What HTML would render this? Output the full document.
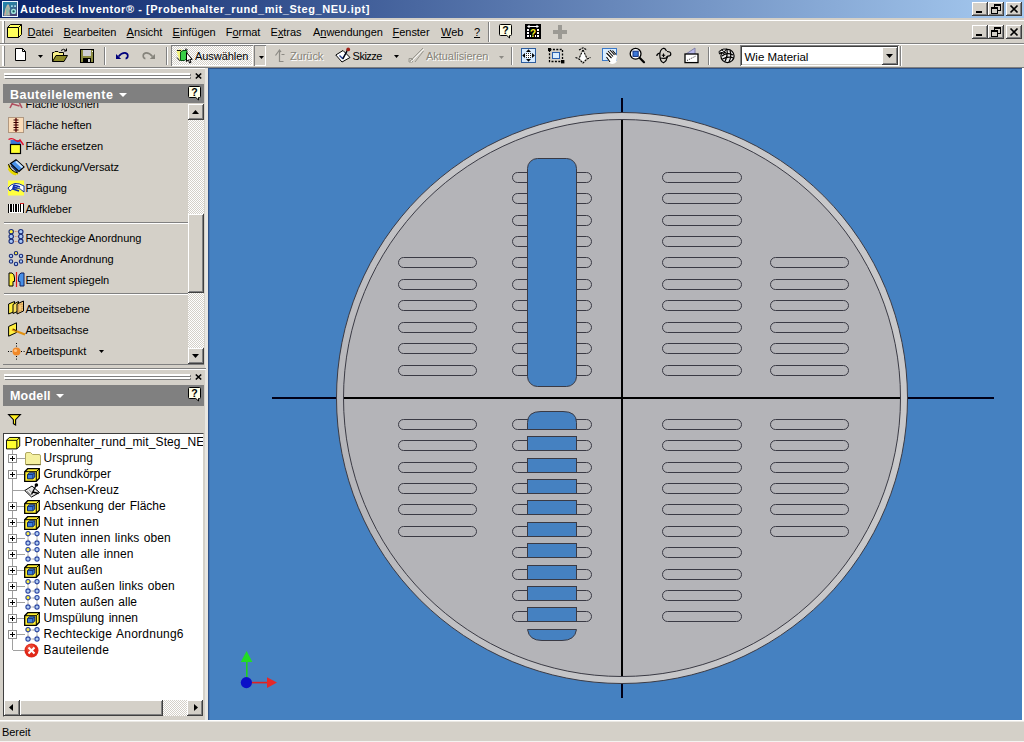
<!DOCTYPE html>
<html lang="de"><head><meta charset="utf-8"><title>Autodesk Inventor - [Probenhalter_rund_mit_Steg_NEU.ipt]</title>
<style>
html,body{margin:0;padding:0}
body{width:1024px;height:742px;overflow:hidden;position:relative;background:#d4d0c8;font-family:"Liberation Sans",sans-serif;font-size:11px;color:#000}
.a{position:absolute}
.t{position:absolute;white-space:nowrap;font-size:11px;line-height:13px;letter-spacing:-0.05px}
.tt{position:absolute;white-space:nowrap;font-size:12px;line-height:16px;word-spacing:1px}
.dis{color:#868378;text-shadow:1px 1px 0 #fff}
u{text-decoration:underline;text-underline-offset:1px}
.btn{position:absolute;background:#d4d0c8;box-shadow:inset -1px -1px 0 #404040,inset 1px 1px 0 #fff,inset -2px -2px 0 #808080;box-sizing:border-box}
.sep{position:absolute;width:1px;background:#808080;box-shadow:1px 0 0 #fff}
.hl{position:absolute;height:1px}
.dith{background-image:conic-gradient(#fff 25%,#d4d0c8 0 50%,#fff 0 75%,#d4d0c8 0);background-size:2px 2px}
svg{position:absolute;overflow:visible}
</style></head>
<body>
<div class="a" style="left:0;top:0;width:1024px;height:18px;background:linear-gradient(to right,#0a246a,#a6caf0)"></div>
<svg style="left:2px;top:1px" width="16" height="16" viewBox="0 0 16 16"><defs><linearGradient id="ai" x1="0" y1="0" x2="0.6" y2="1"><stop offset="0" stop-color="#1f86b0"/><stop offset="0.45" stop-color="#2c7a9c"/><stop offset="1" stop-color="#4a4474"/></linearGradient></defs><rect width="16" height="16" fill="#eaf6ff"/><rect x="1" y="1" width="14" height="14" fill="url(#ai)"/><path d="M2 14.6 L3.2 8 L5 4 Q6 2.4 7 4 L8 7.5 L7.4 10 L8 14.6 Z" fill="#b9b4a8"/><path d="M4.4 6.5 L6.6 6.5 L7 10 L5 14.6 L3.6 14.6 Z" fill="#8fb8a8"/><path d="M2.4 14.6 L3.4 9 L4 9 L3.4 14.6 Z" fill="#d8a090"/><circle cx="11.6" cy="10.4" r="1.9" fill="#0e5a58" stroke="#9fe0dc" stroke-width="1.5"/><rect x="9" y="4.4" width="1.8" height="1.4" fill="#b8f0ff"/><rect x="12.2" y="4.4" width="1.8" height="1.4" fill="#b8f0ff"/></svg>
<div class="a" style="left:20px;top:3px;font-size:11px;line-height:13px;font-weight:bold;color:#fff;white-space:nowrap;letter-spacing:0.55px">Autodesk Inventor® - [Probenhalter_rund_mit_Steg_NEU.ipt]</div>
<div class="btn" style="left:972px;top:2px;width:16px;height:14px"></div>
<div class="btn" style="left:988px;top:2px;width:16px;height:14px"></div>
<div class="btn" style="left:1006px;top:2px;width:16px;height:14px"></div>
<div class="a" style="left:976px;top:11px;width:6px;height:2px;background:#000"></div>
<svg style="left:991px;top:4px" width="10" height="10" viewBox="0 0 10 10" shape-rendering="crispEdges"><rect x="3" y="0" width="6" height="6" fill="none" stroke="#000" stroke-width="1" transform="translate(.5 .5)"/><rect x="3" y="0" width="7" height="2" fill="#000"/><rect x="0" y="3" width="6" height="6" fill="#d4d0c8" stroke="#000" stroke-width="1" transform="translate(.5 .5)"/><rect x="0" y="3" width="7" height="2" fill="#000"/></svg>
<svg style="left:1010px;top:5px" width="8" height="8" viewBox="0 0 8 8"><path d="M0.5 0.5 L7.5 7.5 M7.5 0.5 L0.5 7.5" stroke="#000" stroke-width="1.7" fill="none"/></svg>
<div class="hl" style="left:0;top:20px;width:1024px;background:#fff"></div>
<div class="a" style="left:2px;top:21px;width:2px;height:22px;background:#fff"></div><div class="a" style="left:4px;top:21px;width:1px;height:22px;background:#808080"></div>
<svg style="left:7px;top:24px" width="15" height="14" viewBox="0 0 15 14"><path d="M0.5 3.5 L3.5 0.5 H14.5 V10.5 L11.5 13.5 H0.5 Z" fill="#ffff5a" stroke="#000" stroke-width="1"/><path d="M0.5 3.5 H11.5 V13.5 M11.5 3.5 L14.5 0.5" fill="none" stroke="#000" stroke-width="1"/></svg>
<div class="t" style="left:27.6px;top:26.3px;"><u>D</u>atei</div>
<div class="t" style="left:63.6px;top:26.3px;"><u>B</u>earbeiten</div>
<div class="t" style="left:126.6px;top:26.3px;"><u>A</u>nsicht</div>
<div class="t" style="left:172.6px;top:26.3px;"><u>E</u>infügen</div>
<div class="t" style="left:225.8px;top:26.3px;">F<u>o</u>rmat</div>
<div class="t" style="left:270.6px;top:26.3px;">E<u>x</u>tras</div>
<div class="t" style="left:313px;top:26.3px;">A<u>n</u>wendungen</div>
<div class="t" style="left:392.6px;top:26.3px;"><u>F</u>enster</div>
<div class="t" style="left:441px;top:26.3px;"><u>W</u>eb</div>
<div class="t" style="left:474px;top:26.3px;"><u>?</u></div>
<div class="sep" style="left:488px;top:22px;height:20px"></div>
<svg style="left:499px;top:24px" width="13" height="15" viewBox="0 0 13 15"><path d="M0.5 1.5 Q0.5 0.5 1.5 0.5 H11.5 Q12.5 0.5 12.5 1.5 V10.5 Q12.5 11.5 11.5 11.5 H10.5 V14 L7.8 11.5 H1.5 Q0.5 11.5 0.5 10.5 Z" fill="#ffffe8" stroke="#000" stroke-width="1"/><text x="6.5" y="9.8" font-size="10.5" font-weight="bold" text-anchor="middle" fill="#000" font-family="Liberation Sans,sans-serif">?</text></svg>
<svg style="left:525px;top:24px" width="16" height="15" viewBox="0 0 16 15"><rect width="16" height="15" fill="#000"/><g fill="#fff" shape-rendering="crispEdges"><rect x="2" y="5" width="2" height="2"/><rect x="2" y="8" width="2" height="2"/><rect x="2" y="11" width="2" height="2"/><rect x="12" y="5" width="2" height="2"/><rect x="12" y="8" width="2" height="2"/><rect x="12" y="11" width="2" height="2"/><rect x="5" y="11" width="1" height="2"/><rect x="10" y="11" width="1" height="2"/><rect x="4" y="2" width="8" height="1"/></g><path d="M2 2.5 L4.5 0.8 V4.2 Z M14 2.5 L11.5 0.8 V4.2 Z" fill="#fff"/><text x="8" y="12.6" font-size="10" font-weight="bold" text-anchor="middle" fill="#f4f020" font-family="Liberation Sans,sans-serif">?</text></svg>
<div class="a" style="left:558px;top:25px;width:4px;height:14px;background:#9c9a94"></div><div class="a" style="left:553px;top:30px;width:14px;height:4px;background:#9c9a94"></div>
<div class="btn" style="left:972px;top:25px;width:16px;height:14px"></div>
<div class="btn" style="left:988px;top:25px;width:16px;height:14px"></div>
<div class="btn" style="left:1006px;top:25px;width:16px;height:14px"></div>
<div class="a" style="left:976px;top:34px;width:6px;height:2px;background:#000"></div>
<svg style="left:991px;top:27px" width="10" height="10" viewBox="0 0 10 10" shape-rendering="crispEdges"><rect x="3" y="0" width="6" height="6" fill="none" stroke="#000" stroke-width="1" transform="translate(.5 .5)"/><rect x="3" y="0" width="7" height="2" fill="#000"/><rect x="0" y="3" width="6" height="6" fill="#d4d0c8" stroke="#000" stroke-width="1" transform="translate(.5 .5)"/><rect x="0" y="3" width="7" height="2" fill="#000"/></svg>
<svg style="left:1010px;top:28px" width="8" height="8" viewBox="0 0 8 8"><path d="M0.5 0.5 L7.5 7.5 M7.5 0.5 L0.5 7.5" stroke="#000" stroke-width="1.7" fill="none"/></svg>
<div class="hl" style="left:0;top:43px;width:1024px;background:#808080"></div><div class="hl" style="left:0;top:44px;width:1024px;background:#fff"></div>
<div class="a" style="left:2px;top:46px;width:2px;height:20px;background:#fff"></div><div class="a" style="left:4px;top:46px;width:1px;height:20px;background:#808080"></div>
<svg style="left:15px;top:48px" width="11" height="13" viewBox="0 0 11 13"><path d="M0.5 0.5 H7.5 L10.5 3.5 V12.5 H0.5 Z" fill="#fff" stroke="#000"/><path d="M7.5 0.5 V3.5 H10.5" fill="none" stroke="#000"/></svg>
<svg style="left:38px;top:55px" width="5" height="3" viewBox="0 0 5 3"><path d="M0 0 H5 L2.5 3 Z" fill="#000"/></svg>
<svg style="left:52px;top:48px" width="16" height="14" viewBox="0 0 16 14"><path d="M9 2.5 Q11.5 0 14 2.5 M14.5 0.5 V3 H12" fill="none" stroke="#000" stroke-width="1"/><path d="M0.5 13.5 V4.5 H2 L3 3.5 H6 L7 4.5 H11.5 V7.5" fill="#f8f088" stroke="#000"/><path d="M0.5 13.5 L4 7.5 H15.5 L12 13.5 Z" fill="#8c8a28" stroke="#000"/></svg>
<svg style="left:80px;top:49px" width="14" height="14" viewBox="0 0 14 14" shape-rendering="crispEdges"><rect x="0.5" y="0.5" width="13" height="13" fill="#8a8a40" stroke="#000"/><rect x="3" y="1" width="8" height="6" fill="#cfcfd4"/><rect x="3" y="9" width="8" height="4" fill="#000"/><rect x="8" y="10" width="2" height="3" fill="#d0d0d0"/><rect x="12" y="2" width="1" height="1" fill="#fff"/></svg>
<div class="sep" style="left:104px;top:47px;height:18px"></div>
<svg style="left:116px;top:52px" width="13" height="8" viewBox="0 0 13 8"><path d="M2.5 4.5 Q5.5 0.8 9 0.9 Q11.8 1.4 11.8 3.8 Q11.8 6.3 9.6 6.6" fill="none" stroke="#00007c" stroke-width="1.7"/><path d="M0 2 V7 H5.2 Z" fill="#00007c"/></svg>
<svg style="left:142px;top:52px" width="13" height="8" viewBox="0 0 13 8"><path d="M10.5 4.5 Q7.5 0.8 4 0.9 Q1.2 1.4 1.2 3.8 Q1.2 6.3 3.4 6.6" fill="none" stroke="#86847c" stroke-width="1.6"/><path d="M13 2 V7 H7.8 Z" fill="#86847c"/></svg>
<div class="sep" style="left:166px;top:47px;height:18px"></div>
<div class="a dith" style="left:171px;top:45px;width:82px;height:21px;box-shadow:inset 1px 1px 0 #808080,inset -1px -1px 0 #fff;box-sizing:border-box"></div>
<svg style="left:176px;top:48px" width="17" height="16" viewBox="0 0 17 16"><path d="M0.5 3 L3 1.5 H6 V11 L3.5 12.5 Z" fill="#f4f47c"/><path d="M1 9.5 L3.5 12.5 L5 11.5" fill="none" stroke="#222" stroke-width="1"/><path d="M4.5 4 L7 2.5 H11 V10.5 L8.5 12.5 H4.5 Z" fill="#38d048" stroke="#0a4a18" stroke-width="1"/><path d="M1 2.5 H5 M9 1.5 Q10.5 0 11.5 2" fill="none" stroke="#111" stroke-width="1"/><path d="M10.5 4.5 V13.5 L12.4 11.8 L13.6 15 L15 14.4 L13.8 11.4 H16.2 Z" fill="#fff" stroke="#000" stroke-width="1"/></svg>
<div class="t" style="left:195px;top:50.1px;">Auswählen</div>
<div class="a" style="left:254px;top:45px;width:12px;height:21px;box-shadow:inset 1px 1px 0 #808080,inset -1px -1px 0 #fff"></div>
<svg style="left:259px;top:56px" width="5" height="3" viewBox="0 0 5 3"><path d="M0 0 H5 L2.5 3 Z" fill="#000"/></svg>
<svg style="left:274px;top:49px" width="12" height="14" viewBox="0 0 12 14"><path d="M1.5 6.5 L5.5 1 L7 3 M5.5 1.5 V12.5 H9.5 M7.5 5.5 H10.5" fill="none" stroke="#8c8a84" stroke-width="1.2"/></svg>
<div class="t dis" style="left:290px;top:50.1px;">Zurück</div>
<svg style="left:335px;top:47px" width="17" height="16" viewBox="0 0 17 16"><path d="M0.8 8 L8 3.5 L15 10.5 L7 15 Z" fill="#fff" stroke="#000" stroke-width="1"/><path d="M4.5 8.5 L7.5 11.5 L12 4.5" fill="none" stroke="#203890" stroke-width="1.3"/><path d="M8 12 L12.6 2.6" stroke="#000" stroke-width="1.2"/><circle cx="13.2" cy="2.4" r="1.9" fill="#a02018"/></svg>
<div class="t" style="left:352.6px;top:50.1px;letter-spacing:-0.5px">Skizze</div>
<svg style="left:394px;top:55px" width="5" height="3" viewBox="0 0 5 3"><path d="M0 0 H5 L2.5 3 Z" fill="#000"/></svg>
<svg style="left:408px;top:47px" width="16" height="16" viewBox="0 0 16 16"><path d="M2 14 L15 1 M7 15 L15.5 4 M1 11.5 H4.5 V15 H1 Z" fill="none" stroke="#9a9890" stroke-width="1"/><path d="M3 15 L16 2" stroke="#fff" stroke-width=".8"/></svg>
<div class="t dis" style="left:426px;top:50.1px;">Aktualisieren</div>
<svg style="left:499px;top:56px" width="5" height="3" viewBox="0 0 5 3"><path d="M0 0 H5 L2.5 3 Z" fill="#8c8a84"/></svg>
<div class="sep" style="left:511px;top:47px;height:18px"></div>
<svg style="left:521px;top:48px" width="15" height="15" viewBox="0 0 15 15"><rect x="0.5" y="0.5" width="14" height="14" fill="#d6eaff" stroke="#2c5c9e"/><rect x="5" y="5" width="5" height="5" fill="#fff"/><path d="M5 5.5 H10 M5 7.5 H10 M5 9.5 H10" stroke="#222" stroke-width="1" stroke-dasharray="1 1"/><path d="M7.5 1.2 L10 4 H5 Z M7.5 13.8 L10 11 H5 Z M1.2 7.5 L4 5 V10 Z M13.8 7.5 L11 5 V10 Z" fill="#000"/></svg>
<svg style="left:548px;top:48px" width="17" height="16" viewBox="0 0 17 16"><rect x="1.5" y="1.5" width="13" height="12" fill="none" stroke="#000" stroke-width="1.3" stroke-dasharray="2 1.4"/><rect x="0" y="0" width="3" height="3" fill="#000"/><rect x="13" y="12" width="3.4" height="3.4" fill="#000"/><rect x="4.5" y="4.5" width="7" height="6" fill="#d8ecff" stroke="#2a60b0" stroke-width="1"/></svg>
<svg style="left:575px;top:47px" width="16" height="17" viewBox="0 0 16 17"><path d="M4 3 L8 0.8 L12 3 M8 3 L4.2 11 M8 3 L11.8 11 M0.5 10.5 L4 12 L8 16 L12 12 L15.5 10.5" fill="none" stroke="#000" stroke-width="1.1" stroke-dasharray="2.2 .8"/><path d="M8 4 L5 11.5 L8 14.5 L11 11.5 Z" fill="#fff"/></svg>
<svg style="left:602px;top:48px" width="17" height="17" viewBox="0 0 17 17"><rect x="0.5" y="0.5" width="14" height="12" fill="#d8ecff" stroke="#3a78c8"/><path d="M5 11 L4 6 L5.5 3 L12 3 L15 8 L14.5 14 Q11 17.5 7.5 15 Z" fill="#fff"/><path d="M4.5 5 L9.5 10 M6 3 L11 8.5 M8 2 L12.5 7 M10.5 2.5 L14 6.5 M4.5 9 L8 14" stroke="#000" stroke-width="1.1" fill="none"/></svg>
<svg style="left:629px;top:47px" width="17" height="17" viewBox="0 0 17 17"><circle cx="6.6" cy="6.8" r="5.4" fill="#fff" stroke="#000" stroke-width="1.3"/><rect x="4" y="4.2" width="5.2" height="5.2" fill="#3c78d8" stroke="#103080" stroke-width="1"/><path d="M10.8 11 L15 15.2" stroke="#000" stroke-width="2.2" stroke-linecap="round"/></svg>
<svg style="left:656px;top:47px" width="17" height="17" viewBox="0 0 17 17"><path d="M7.5 1.2 Q3.6 2.5 3.8 8.5 Q4 14.5 7.5 15.8 Q11 14 11.2 9 M7.5 1.2 Q9.5 1.6 10.5 4" fill="none" stroke="#000" stroke-width="1.2"/><path d="M0.8 9 Q0.8 6.8 3.8 6.2 M11 4.5 Q14.8 4.6 14.8 7 Q14.8 9.2 12 9.2 Q10.8 9.2 11.2 10.6 Q9 12 4 11" fill="none" stroke="#000" stroke-width="1.2"/><path d="M7.5 6.6 V10 M5.8 8.3 H9.2" stroke="#000" stroke-width="1.1"/></svg>
<svg style="left:684px;top:47px" width="15" height="17" viewBox="0 0 15 17"><path d="M2 7 L11 1 V7" fill="#b8b8e8" stroke="#8080a8" stroke-width="1"/><rect x="1" y="7" width="13" height="8.6" fill="#fff" stroke="#000" stroke-width="1.3"/><path d="M3 13.5 L12 9" stroke="#000" stroke-width=".8" stroke-dasharray="1.2 1.2"/></svg>
<div class="sep" style="left:708px;top:47px;height:18px"></div>
<svg style="left:718px;top:47px" width="17" height="17" viewBox="0 0 17 17"><circle cx="9.5" cy="9" r="6.6" fill="#e8e8e8" stroke="#000" stroke-width="1.2"/><path d="M4 9 Q9 5 15 8 M4.5 12 Q10 9 15.5 11 M7 14.5 Q10 8 9 3 M11 15 Q14 9 12 3.5" fill="none" stroke="#000" stroke-width="1.2"/><path d="M1 4.5 Q5 1 9 2 Q6 3.5 6.5 6 Q3 5 1.5 7 Z" fill="#fff" stroke="#000" stroke-width="1"/><path d="M3 2.6 L8 6 M2 5 L6 6.5" stroke="#000" stroke-width="1"/></svg>
<div class="a" style="left:740px;top:45px;width:159px;height:21px;background:#fff;box-sizing:border-box;box-shadow:inset 1px 1px 0 #808080,inset -1px -1px 0 #fff,inset 2px 2px 0 #404040,inset -2px -2px 0 #d4d0c8"></div>
<div class="t" style="left:744.5px;top:50.5px;font-size:11.5px;letter-spacing:0">Wie Material</div>
<div class="btn" style="left:882px;top:47px;width:16px;height:18px"></div>
<svg style="left:886px;top:54px" width="7" height="4" viewBox="0 0 7 4"><path d="M0 0 H7 L3.5 4 Z" fill="#000"/></svg>
<div class="a" style="left:900px;top:46px;width:1px;height:20px;background:#808080"></div><div class="a" style="left:901px;top:46px;width:1px;height:20px;background:#fff"></div>
<div class="hl" style="left:0;top:67px;width:1024px;background:#808080"></div><div class="hl" style="left:0;top:68px;width:207px;background:#fff"></div>
<svg style="position:absolute;left:208px;top:68px" width="814" height="652" viewBox="208 68 814 652">
<rect x="208" y="68" width="814" height="652" fill="#4581c1"/>
<rect x="272" y="397" width="722" height="2" fill="#000018"/>
<rect x="621" y="98" width="2" height="600" fill="#000018"/>
<defs><linearGradient id="rg" x1="0" y1="0.6" x2="1" y2="0.4"><stop offset="0" stop-color="#b4b4b8"/><stop offset="0.12" stop-color="#c0c0c3"/><stop offset="0.4" stop-color="#c7c7c9"/><stop offset="1" stop-color="#c8c8ca"/></linearGradient></defs>
<circle cx="622" cy="398" r="285.5" fill="url(#rg)" stroke="#3a3a44" stroke-width="1"/>
<circle cx="622" cy="398" r="278.5" fill="#b4b4b8" stroke="#3a3a44" stroke-width="1"/>
<rect x="344" y="397" width="556" height="2" fill="#000"/>
<rect x="621" y="120" width="2" height="556" fill="#000"/>
<g fill="none" stroke="#3a3a44" stroke-width="1">
<rect x="512.5" y="172.5" width="79" height="10" rx="5" ry="5"/>
<rect x="662.5" y="172.5" width="79" height="10" rx="5" ry="5"/>
<rect x="512.5" y="419.5" width="79" height="10" rx="5" ry="5"/>
<rect x="662.5" y="419.5" width="79" height="10" rx="5" ry="5"/>
<rect x="512.5" y="193.5" width="79" height="10" rx="5" ry="5"/>
<rect x="662.5" y="193.5" width="79" height="10" rx="5" ry="5"/>
<rect x="512.5" y="440.5" width="79" height="10" rx="5" ry="5"/>
<rect x="662.5" y="440.5" width="79" height="10" rx="5" ry="5"/>
<rect x="512.5" y="215.5" width="79" height="10" rx="5" ry="5"/>
<rect x="662.5" y="215.5" width="79" height="10" rx="5" ry="5"/>
<rect x="512.5" y="462.5" width="79" height="10" rx="5" ry="5"/>
<rect x="662.5" y="462.5" width="79" height="10" rx="5" ry="5"/>
<rect x="512.5" y="236.5" width="79" height="10" rx="5" ry="5"/>
<rect x="662.5" y="236.5" width="79" height="10" rx="5" ry="5"/>
<rect x="512.5" y="483.5" width="79" height="10" rx="5" ry="5"/>
<rect x="662.5" y="483.5" width="79" height="10" rx="5" ry="5"/>
<rect x="512.5" y="257.5" width="79" height="10" rx="5" ry="5"/>
<rect x="662.5" y="257.5" width="79" height="10" rx="5" ry="5"/>
<rect x="512.5" y="504.5" width="79" height="10" rx="5" ry="5"/>
<rect x="662.5" y="504.5" width="79" height="10" rx="5" ry="5"/>
<rect x="512.5" y="279.5" width="79" height="10" rx="5" ry="5"/>
<rect x="662.5" y="279.5" width="79" height="10" rx="5" ry="5"/>
<rect x="512.5" y="526.5" width="79" height="10" rx="5" ry="5"/>
<rect x="662.5" y="526.5" width="79" height="10" rx="5" ry="5"/>
<rect x="512.5" y="300.5" width="79" height="10" rx="5" ry="5"/>
<rect x="662.5" y="300.5" width="79" height="10" rx="5" ry="5"/>
<rect x="512.5" y="547.5" width="79" height="10" rx="5" ry="5"/>
<rect x="662.5" y="547.5" width="79" height="10" rx="5" ry="5"/>
<rect x="512.5" y="322.5" width="79" height="10" rx="5" ry="5"/>
<rect x="662.5" y="322.5" width="79" height="10" rx="5" ry="5"/>
<rect x="512.5" y="569.5" width="79" height="10" rx="5" ry="5"/>
<rect x="662.5" y="569.5" width="79" height="10" rx="5" ry="5"/>
<rect x="512.5" y="343.5" width="79" height="10" rx="5" ry="5"/>
<rect x="662.5" y="343.5" width="79" height="10" rx="5" ry="5"/>
<rect x="512.5" y="590.5" width="79" height="10" rx="5" ry="5"/>
<rect x="662.5" y="590.5" width="79" height="10" rx="5" ry="5"/>
<rect x="512.5" y="365.5" width="79" height="10" rx="5" ry="5"/>
<rect x="662.5" y="365.5" width="79" height="10" rx="5" ry="5"/>
<rect x="512.5" y="611.5" width="79" height="10" rx="5" ry="5"/>
<rect x="662.5" y="611.5" width="79" height="10" rx="5" ry="5"/>
<rect x="398.5" y="257.5" width="78" height="10" rx="5" ry="5"/>
<rect x="770.5" y="257.5" width="78" height="10" rx="5" ry="5"/>
<rect x="398.5" y="279.5" width="78" height="10" rx="5" ry="5"/>
<rect x="770.5" y="279.5" width="78" height="10" rx="5" ry="5"/>
<rect x="398.5" y="300.5" width="78" height="10" rx="5" ry="5"/>
<rect x="770.5" y="300.5" width="78" height="10" rx="5" ry="5"/>
<rect x="398.5" y="322.5" width="78" height="10" rx="5" ry="5"/>
<rect x="770.5" y="322.5" width="78" height="10" rx="5" ry="5"/>
<rect x="398.5" y="343.5" width="78" height="10" rx="5" ry="5"/>
<rect x="770.5" y="343.5" width="78" height="10" rx="5" ry="5"/>
<rect x="398.5" y="365.5" width="78" height="10" rx="5" ry="5"/>
<rect x="770.5" y="365.5" width="78" height="10" rx="5" ry="5"/>
<rect x="398.5" y="419.5" width="78" height="10" rx="5" ry="5"/>
<rect x="770.5" y="419.5" width="78" height="10" rx="5" ry="5"/>
<rect x="398.5" y="440.5" width="78" height="10" rx="5" ry="5"/>
<rect x="770.5" y="440.5" width="78" height="10" rx="5" ry="5"/>
<rect x="398.5" y="462.5" width="78" height="10" rx="5" ry="5"/>
<rect x="770.5" y="462.5" width="78" height="10" rx="5" ry="5"/>
<rect x="398.5" y="483.5" width="78" height="10" rx="5" ry="5"/>
<rect x="770.5" y="483.5" width="78" height="10" rx="5" ry="5"/>
<rect x="398.5" y="504.5" width="78" height="10" rx="5" ry="5"/>
<rect x="770.5" y="504.5" width="78" height="10" rx="5" ry="5"/>
<rect x="398.5" y="526.5" width="78" height="10" rx="5" ry="5"/>
<rect x="770.5" y="526.5" width="78" height="10" rx="5" ry="5"/>
</g>
<g fill="#4581c1" stroke="#3a3a44" stroke-width="1">
<rect x="527.5" y="158.5" width="49" height="228" rx="10" ry="10"/>
<path d="M527.5 429.5 V422.5 Q527.5 411.5 541 411.5 H563 Q576.5 411.5 576.5 422.5 V429.5 Z"/>
<rect x="527.5" y="436.5" width="49" height="14.0"/>
<rect x="527.5" y="458.5" width="49" height="14.0"/>
<rect x="527.5" y="479.5" width="49" height="14.0"/>
<rect x="527.5" y="500.5" width="49" height="14.0"/>
<rect x="527.5" y="522.5" width="49" height="14.0"/>
<rect x="527.5" y="543.5" width="49" height="14.0"/>
<rect x="527.5" y="565.5" width="49" height="14.0"/>
<rect x="527.5" y="586.5" width="49" height="14.0"/>
<rect x="527.5" y="607.5" width="49" height="14.0"/>
<path d="M527.5 629.5 H576.5 Q575 640.5 562 640.5 H542 Q529 640.5 527.5 629.5 Z"/>
</g>
<rect x="246" y="661" width="1.6" height="18" fill="#20d020"/>
<path d="M246.6 651 L252.4 662 H240.8 Z" fill="#22dd22"/>
<rect x="250" y="681.8" width="18" height="1.6" fill="#e02020"/>
<path d="M277 682.6 L267 677.2 V688 Z" fill="#e62828"/>
<circle cx="246.4" cy="682.6" r="5.6" fill="#0a10c8"/>
<rect x="208" y="68" width="814" height="1" fill="#2f5388"/><rect x="208" y="68" width="1" height="652" fill="#2f5388"/><rect x="209" y="69" width="1" height="651" fill="#4274b2"/>
</svg>
<div class="a" style="left:205px;top:68px;width:3px;height:652px;background:#e8e6e1"></div>
<div class="a" style="left:4px;top:73px;width:186px;height:2px;background:#fff;box-shadow:1px 1px 0 #808080"></div><div class="a" style="left:4px;top:76px;width:186px;height:2px;background:#fff;box-shadow:1px 1px 0 #808080"></div><svg style="left:195px;top:73px" width="7" height="6" viewBox="0 0 7 6"><path d="M0.8 0.5 L6.2 5.5 M6.2 0.5 L0.8 5.5" stroke="#000" stroke-width="1.6" fill="none"/></svg>
<div class="a" style="left:3px;top:84px;width:201px;height:19px;background:#808080"></div><div class="a" style="left:10px;top:88px;font-size:12.5px;line-height:15px;font-weight:bold;color:#fff;white-space:nowrap;letter-spacing:0.5px">Bauteilelemente</div><svg style="left:119px;top:93px" width="8" height="4" viewBox="0 0 8 4"><path d="M0 0 H8 L4.0 4 Z" fill="#fff"/></svg><svg style="left:188px;top:86px" width="13" height="15" viewBox="0 0 13 15"><path d="M0.5 1.5 Q0.5 0.5 1.5 0.5 H11.5 Q12.5 0.5 12.5 1.5 V10.5 Q12.5 11.5 11.5 11.5 H10.5 V14 L7.8 11.5 H1.5 Q0.5 11.5 0.5 10.5 Z" fill="#ffffe8" stroke="#000" stroke-width="1"/><text x="6.5" y="9.8" font-size="10.5" font-weight="bold" text-anchor="middle" fill="#000" font-family="Liberation Sans,sans-serif">?</text></svg>
<div class="a" style="left:0;top:103px;width:188px;height:8px;overflow:hidden"><div class="t" style="left:25.6px;top:-4.6px">Fläche löschen</div><svg style="left:9px;top:-8px" width="14" height="14" viewBox="0 0 14 14"><path d="M1 13 L7 1 L13 13 M3.5 9 L10.5 11" stroke="#b05060" stroke-width="1.6" fill="none"/></svg></div>
<svg style="left:8px;top:117px" width="16" height="16" viewBox="0 0 16 16"><rect x="0.5" y="0.5" width="15" height="15" fill="#fbdcb8" stroke="#7a5a40" stroke-width="1" stroke-dasharray="1 1"/><path d="M8 1 V15" stroke="#701010" stroke-width="1.4"/><path d="M5.5 3 H10.5 M5.5 5.5 H10.5 M5.5 8 H10.5 M5.5 10.5 H10.5 M5.5 13 H10.5" stroke="#300" stroke-width="1"/></svg>
<div class="t" style="left:25.6px;top:119.0px;">Fläche heften</div>
<svg style="left:8px;top:138px" width="17" height="16" viewBox="0 0 17 16"><rect x="2.5" y="2" width="10" height="5" fill="#3c78d8"/><rect x="2.5" y="6.5" width="10" height="9" fill="#ffff30" stroke="#000" stroke-width="1.2"/><path d="M0.5 1.5 Q4 -0.5 7 2 Q10 4.5 12 2 L15.5 7" fill="none" stroke="#e01030" stroke-width="1.4"/></svg>
<div class="t" style="left:25.6px;top:140.0px;">Fläche ersetzen</div>
<svg style="left:8px;top:159px" width="17" height="16" viewBox="0 0 17 16"><path d="M0.5 6 Q2 13 10 15 M0.5 9.5 Q3 14.5 8 15.5" fill="none" stroke="#e8d800" stroke-width="1.8"/><path d="M0.5 5 Q2 12 10 14" fill="none" stroke="#000" stroke-width="1"/><path d="M2.5 4.5 L8 0.8 L16 8 L11 12.5 Z" fill="#4890e8" stroke="#000" stroke-width="1.2"/><path d="M8 2.5 L14.5 8.5" stroke="#c8e4ff" stroke-width="2"/><path d="M3 6.5 L9.5 13" stroke="#103070" stroke-width="1.6"/></svg>
<div class="t" style="left:25.6px;top:161.0px;">Verdickung/Versatz</div>
<svg style="left:8px;top:180px" width="17" height="16" viewBox="0 0 17 16"><rect x="0" y="0.5" width="16" height="15" fill="#ffff40"/><path d="M0 8 Q6 0 16 6 L16 12 Q8 4 2 11 Z" fill="#fff" stroke="#1838a0" stroke-width="1"/><path d="M6 5 L12 7 M6 5 L5 9 L11 11 M5.6 7 L9.5 8.2" stroke="#1030b0" stroke-width="1.7" fill="none"/></svg>
<div class="t" style="left:25.6px;top:182.0px;">Prägung</div>
<svg style="left:8px;top:203px" width="17" height="11" viewBox="0 0 17 11" shape-rendering="crispEdges"><rect x="0" y="1" width="16" height="9" fill="#fff"/><g fill="#000"><rect x="0" y="1" width="1" height="9"/><rect x="2" y="1" width="2" height="8"/><rect x="5" y="1" width="1" height="8"/><rect x="7" y="1" width="2" height="8"/><rect x="10" y="1" width="1" height="8"/><rect x="12" y="1" width="1" height="8"/><rect x="15" y="1" width="1" height="9"/></g><rect x="12" y="0" width="4" height="1" fill="#d02020"/></svg>
<div class="t" style="left:25.6px;top:203.0px;">Aufkleber</div>
<svg style="left:8px;top:229px" width="16" height="15" viewBox="0 0 16 15"><path d="M3 2.5 H13 M3 7.5 H13 M3 12.5 H13" stroke="#c05028" stroke-width=".8" stroke-dasharray="1 1.2"/><circle cx="3.2" cy="2.7" r="2.2" fill="#ffef40" stroke="#1a2c78" stroke-width="1.1"/><circle cx="12.8" cy="2.7" r="2.2" fill="#a8c8f8" stroke="#1a2c78" stroke-width="1.1"/><circle cx="3.2" cy="7.5" r="2.2" fill="#a8c8f8" stroke="#1a2c78" stroke-width="1.1"/><circle cx="12.8" cy="7.5" r="2.2" fill="#a8c8f8" stroke="#1a2c78" stroke-width="1.1"/><circle cx="3.2" cy="12.3" r="2.2" fill="#a8c8f8" stroke="#1a2c78" stroke-width="1.1"/><circle cx="12.8" cy="12.3" r="2.2" fill="#a8c8f8" stroke="#1a2c78" stroke-width="1.1"/></svg>
<div class="t" style="left:25.6px;top:232.0px;">Rechteckige Anordnung</div>
<svg style="left:8px;top:251px" width="16" height="15" viewBox="0 0 16 15"><circle cx="8" cy="2.2" r="1.7" fill="#ffef40" stroke="#1a2c78" stroke-width="1.1"/><circle cx="13" cy="5" r="1.7" fill="#a8c8f8" stroke="#1a2c78" stroke-width="1.1"/><circle cx="13" cy="10.5" r="1.7" fill="#a8c8f8" stroke="#1a2c78" stroke-width="1.1"/><circle cx="8" cy="13" r="1.7" fill="#a8c8f8" stroke="#1a2c78" stroke-width="1.1"/><circle cx="3" cy="10.5" r="1.7" fill="#a8c8f8" stroke="#1a2c78" stroke-width="1.1"/><circle cx="3" cy="5" r="1.7" fill="#a8c8f8" stroke="#1a2c78" stroke-width="1.1"/></svg>
<div class="t" style="left:25.6px;top:253.0px;">Runde Anordnung</div>
<svg style="left:8px;top:272px" width="17" height="15" viewBox="0 0 17 15"><path d="M1 1 H4 Q6.5 2 6.5 6 V9.5 H5 V14 H1 Z" fill="#ffef30" stroke="#000" stroke-width="1"/><path d="M16 1 H13 Q10.5 2 10.5 6 V9.5 H12 V14 H16 Z" fill="#4890e8" stroke="#102060" stroke-width="1"/><path d="M8.5 0 V15" stroke="#e01818" stroke-width="1.2"/></svg>
<div class="t" style="left:25.6px;top:274.0px;">Element spiegeln</div>
<svg style="left:8px;top:300px" width="17" height="15" viewBox="0 0 17 15"><path d="M0.6 4 L6.5 1.5 V11.5 L0.6 14 Z" fill="#ffef40" stroke="#000" stroke-width="1"/><path d="M5 4.5 L10.5 1.5 V11 L5 13.5 Z" fill="#f8e060" stroke="#000" stroke-width="1"/><path d="M9 4 L15.5 1 V11 L9 14 Z" fill="#f4c878" stroke="#000" stroke-width="1"/><path d="M10.5 5 L14 3.6 V10 L10.5 11.5 Z" fill="none" stroke="#a06020" stroke-width=".7" stroke-dasharray="1 1"/></svg>
<div class="t" style="left:25.6px;top:303.0px;">Arbeitsebene</div>
<svg style="left:8px;top:322px" width="18" height="15" viewBox="0 0 18 15"><path d="M0.6 4.5 L8.5 0.8 V10.5 L0.6 14.2 Z" fill="#ffef40" stroke="#000" stroke-width="1"/><path d="M4 7.5 L17 12.5" stroke="#e09010" stroke-width="2"/><path d="M5 7 L9 9" stroke="#503000" stroke-width="1"/></svg>
<div class="t" style="left:25.6px;top:324.0px;">Arbeitsachse</div>
<svg style="left:8px;top:343px" width="17" height="17" viewBox="0 0 17 17"><path d="M8.5 0 V17 M0 8.5 H17" stroke="#000" stroke-width="1" stroke-dasharray="1 1.6"/><circle cx="8.5" cy="8.5" r="4" fill="#f08828"/><circle cx="7.5" cy="7.5" r="1.6" fill="#ffc080"/></svg>
<div class="t" style="left:25.6px;top:345.0px;">Arbeitspunkt</div>
<svg style="left:99px;top:350px" width="5" height="3" viewBox="0 0 5 3"><path d="M0 0 H5 L2.5 3 Z" fill="#000"/></svg>
<div class="a" style="left:4px;top:222px;width:184px;height:1px;background:#808080;box-shadow:0 1px 0 #fff"></div>
<div class="a" style="left:4px;top:293px;width:184px;height:1px;background:#808080;box-shadow:0 1px 0 #fff"></div>
<div class="a dith" style="left:188px;top:104px;width:16px;height:260px"></div><div class="btn" style="left:188px;top:104px;width:16px;height:16px"></div><svg style="left:192px;top:110px" width="7" height="4" viewBox="0 0 7 4"><path d="M0 4 H7 L3.5 0 Z" fill="#000"/></svg><div class="btn" style="left:188px;top:348px;width:16px;height:16px"></div><svg style="left:192px;top:354px" width="7" height="4" viewBox="0 0 7 4"><path d="M0 0 H7 L3.5 4 Z" fill="#000"/></svg><div class="btn" style="left:188px;top:214px;width:16px;height:79px"></div>
<div class="a" style="left:3px;top:364px;width:201px;height:1px;background:#808080"></div>
<div class="a" style="left:0;top:369px;width:206px;height:1px;background:#fff"></div>
<div class="a" style="left:0;top:368px;width:206px;height:1px;background:#808080"></div>
<div class="a" style="left:4px;top:374px;width:186px;height:2px;background:#fff;box-shadow:1px 1px 0 #808080"></div><div class="a" style="left:4px;top:377px;width:186px;height:2px;background:#fff;box-shadow:1px 1px 0 #808080"></div><svg style="left:195px;top:374px" width="7" height="6" viewBox="0 0 7 6"><path d="M0.8 0.5 L6.2 5.5 M6.2 0.5 L0.8 5.5" stroke="#000" stroke-width="1.6" fill="none"/></svg>
<div class="a" style="left:3px;top:385px;width:201px;height:21px;background:#808080"></div><div class="a" style="left:10px;top:389px;font-size:12.5px;line-height:15px;font-weight:bold;color:#fff;white-space:nowrap;letter-spacing:0.2px">Modell</div><svg style="left:56px;top:394px" width="8" height="4" viewBox="0 0 8 4"><path d="M0 0 H8 L4.0 4 Z" fill="#fff"/></svg><svg style="left:188px;top:387px" width="13" height="15" viewBox="0 0 13 15"><path d="M0.5 1.5 Q0.5 0.5 1.5 0.5 H11.5 Q12.5 0.5 12.5 1.5 V10.5 Q12.5 11.5 11.5 11.5 H10.5 V14 L7.8 11.5 H1.5 Q0.5 11.5 0.5 10.5 Z" fill="#ffffe8" stroke="#000" stroke-width="1"/><text x="6.5" y="9.8" font-size="10.5" font-weight="bold" text-anchor="middle" fill="#000" font-family="Liberation Sans,sans-serif">?</text></svg>
<svg style="left:8px;top:414px" width="13" height="12" viewBox="0 0 13 12"><path d="M0.6 0.6 H12.4 L7.6 5.6 V11 L5.4 9.6 V5.6 Z" fill="#ffef20" stroke="#000" stroke-width="1.1"/></svg>
<div class="a" style="left:3px;top:433px;width:201px;height:284px;background:#fff;box-sizing:border-box;border:1px solid #404040;border-right-color:#d4d0c8;border-bottom-color:#d4d0c8;overflow:hidden" id="tree">
<svg style="left:2px;top:3px" width="14.2" height="12.4" viewBox="0 0 15 13" preserveAspectRatio="none"><path d="M0.5 3.5 L3.5 0.5 H14.5 V9.5 L11.5 12.5 H0.5 Z" fill="#ffff30" stroke="#000" stroke-width="1"/><path d="M0.5 3.5 H11.5 V12.5 M11.5 3.5 L14.5 0.5" fill="none" stroke="#000" stroke-width="1"/></svg>
<div class="tt" style="left:20.6px;top:0.3px;word-spacing:0;letter-spacing:0.1px">Probenhalter_rund_mit_Steg_NEU.ipt</div>
<div class="a" style="left:8px;top:16px;width:1px;height:200px;background:#a0a0a0"></div>
<div class="a" style="left:9px;top:24px;width:12px;height:1px;background:#a0a0a0"></div>
<svg style="left:4px;top:20px" width="9" height="9" viewBox="0 0 9 9" shape-rendering="crispEdges"><rect x="0.5" y="0.5" width="8" height="8" fill="#fff" stroke="#909090"/><path d="M2 4.5 H7 M4.5 2 V7" stroke="#000" stroke-width="1"/></svg>
<svg style="left:21px;top:18px" width="16" height="13" viewBox="0 0 16 13"><path d="M0.5 12.5 V2 Q0.5 0.5 2 0.5 H5.5 L7.5 2.5 H14 Q15.5 2.5 15.5 4 V12.5 Z" fill="#f4f0a0" stroke="#b0a860" stroke-width="1"/><path d="M1 12.6 H15.6" stroke="#6a6430" stroke-width="1.2"/></svg>
<div class="tt" style="left:39.6px;top:16.0px;letter-spacing:0px">Ursprung</div>
<div class="a" style="left:9px;top:40px;width:12px;height:1px;background:#a0a0a0"></div>
<svg style="left:4px;top:36px" width="9" height="9" viewBox="0 0 9 9" shape-rendering="crispEdges"><rect x="0.5" y="0.5" width="8" height="8" fill="#fff" stroke="#909090"/><path d="M2 4.5 H7 M4.5 2 V7" stroke="#000" stroke-width="1"/></svg>
<svg style="left:20px;top:34px" width="16" height="14" viewBox="0 0 16 14"><path d="M0.7 3.7 L3.7 0.7 H15.3 V10.3 L12.3 13.3 H0.7 Z" fill="#ffef30" stroke="#000" stroke-width="1.3"/><path d="M0.7 3.7 H12.3 V13.3 M12.3 3.7 L15.3 0.7" fill="none" stroke="#000" stroke-width="1"/><path d="M3.5 6.5 L5.5 4.8 H10.8 V9 L8.8 10.8 H3.5 Z" fill="#3c80e0" stroke="#102868" stroke-width="1"/><path d="M3.5 6.5 H8.8 V10.8 M8.8 6.5 L10.8 4.8" stroke="#102868" stroke-width=".8" fill="none"/></svg>
<div class="tt" style="left:39.6px;top:32.0px;letter-spacing:0px">Grundkörper</div>
<div class="a" style="left:9px;top:56px;width:12px;height:1px;background:#a0a0a0"></div>
<svg style="left:20px;top:49px" width="17" height="15" viewBox="0 0 17 15"><path d="M0.8 7.5 L8 3 L15.5 9.5 L7.5 14 Z" fill="#e8e8e8" stroke="#000" stroke-width="1"/><path d="M3 8 L7 12 M5 6.8 L9 10.6" stroke="#888" stroke-width=".8"/><path d="M7.5 11.5 L12 2.5 M9 9 L14.5 10.5" stroke="#000" stroke-width="1.3"/><circle cx="12.4" cy="2" r="1.8" fill="#000"/></svg>
<div class="tt" style="left:39.6px;top:48.0px;letter-spacing:0px">Achsen-Kreuz</div>
<div class="a" style="left:9px;top:72px;width:12px;height:1px;background:#a0a0a0"></div>
<svg style="left:4px;top:68px" width="9" height="9" viewBox="0 0 9 9" shape-rendering="crispEdges"><rect x="0.5" y="0.5" width="8" height="8" fill="#fff" stroke="#909090"/><path d="M2 4.5 H7 M4.5 2 V7" stroke="#000" stroke-width="1"/></svg>
<svg style="left:20px;top:66px" width="16" height="14" viewBox="0 0 16 14"><path d="M0.7 3.7 L3.7 0.7 H15.3 V10.3 L12.3 13.3 H0.7 Z" fill="#ffef30" stroke="#000" stroke-width="1.3"/><path d="M0.7 3.7 H12.3 V13.3 M12.3 3.7 L15.3 0.7" fill="none" stroke="#000" stroke-width="1"/><path d="M3.5 6.5 L5.5 4.8 H10.8 V9 L8.8 10.8 H3.5 Z" fill="#3c80e0" stroke="#102868" stroke-width="1"/><path d="M3.5 6.5 H8.8 V10.8 M8.8 6.5 L10.8 4.8" stroke="#102868" stroke-width=".8" fill="none"/></svg>
<div class="tt" style="left:39.6px;top:64.0px;letter-spacing:0px">Absenkung der Fläche</div>
<div class="a" style="left:9px;top:88px;width:12px;height:1px;background:#a0a0a0"></div>
<svg style="left:4px;top:84px" width="9" height="9" viewBox="0 0 9 9" shape-rendering="crispEdges"><rect x="0.5" y="0.5" width="8" height="8" fill="#fff" stroke="#909090"/><path d="M2 4.5 H7 M4.5 2 V7" stroke="#000" stroke-width="1"/></svg>
<svg style="left:20px;top:82px" width="16" height="14" viewBox="0 0 16 14"><path d="M0.7 3.7 L3.7 0.7 H15.3 V10.3 L12.3 13.3 H0.7 Z" fill="#ffef30" stroke="#000" stroke-width="1.3"/><path d="M0.7 3.7 H12.3 V13.3 M12.3 3.7 L15.3 0.7" fill="none" stroke="#000" stroke-width="1"/><path d="M3.5 6.5 L5.5 4.8 H10.8 V9 L8.8 10.8 H3.5 Z" fill="#3c80e0" stroke="#102868" stroke-width="1"/><path d="M3.5 6.5 H8.8 V10.8 M8.8 6.5 L10.8 4.8" stroke="#102868" stroke-width=".8" fill="none"/></svg>
<div class="tt" style="left:39.6px;top:80.0px;letter-spacing:0.38px">Nut innen</div>
<div class="a" style="left:9px;top:104px;width:12px;height:1px;background:#a0a0a0"></div>
<svg style="left:4px;top:100px" width="9" height="9" viewBox="0 0 9 9" shape-rendering="crispEdges"><rect x="0.5" y="0.5" width="8" height="8" fill="#fff" stroke="#909090"/><path d="M2 4.5 H7 M4.5 2 V7" stroke="#000" stroke-width="1"/></svg>
<svg style="left:20.5px;top:97px" width="15" height="15" viewBox="0 0 15 15"><path d="M3 3 H12 M3 12 H12 M3 3 V12 M12 3 V12" stroke="#333" stroke-width=".9" stroke-dasharray="1 1.3"/><circle cx="3" cy="2.6" r="2.1" fill="#ffef40" stroke="#2a44a0" stroke-width="1.1"/><circle cx="12" cy="2.6" r="2.1" fill="#b0ccf4" stroke="#2a44a0" stroke-width="1.1"/><circle cx="3" cy="12" r="2.1" fill="#b0ccf4" stroke="#2a44a0" stroke-width="1.1"/><circle cx="12" cy="12" r="2.1" fill="#b0ccf4" stroke="#2a44a0" stroke-width="1.1"/></svg>
<div class="tt" style="left:39.6px;top:96.0px;letter-spacing:0.1px">Nuten innen links oben</div>
<div class="a" style="left:9px;top:120px;width:12px;height:1px;background:#a0a0a0"></div>
<svg style="left:4px;top:116px" width="9" height="9" viewBox="0 0 9 9" shape-rendering="crispEdges"><rect x="0.5" y="0.5" width="8" height="8" fill="#fff" stroke="#909090"/><path d="M2 4.5 H7 M4.5 2 V7" stroke="#000" stroke-width="1"/></svg>
<svg style="left:20.5px;top:113px" width="15" height="15" viewBox="0 0 15 15"><path d="M3 3 H12 M3 12 H12 M3 3 V12 M12 3 V12" stroke="#333" stroke-width=".9" stroke-dasharray="1 1.3"/><circle cx="3" cy="2.6" r="2.1" fill="#ffef40" stroke="#2a44a0" stroke-width="1.1"/><circle cx="12" cy="2.6" r="2.1" fill="#b0ccf4" stroke="#2a44a0" stroke-width="1.1"/><circle cx="3" cy="12" r="2.1" fill="#b0ccf4" stroke="#2a44a0" stroke-width="1.1"/><circle cx="12" cy="12" r="2.1" fill="#b0ccf4" stroke="#2a44a0" stroke-width="1.1"/></svg>
<div class="tt" style="left:39.6px;top:112.0px;letter-spacing:0.08px">Nuten alle innen</div>
<div class="a" style="left:9px;top:136px;width:12px;height:1px;background:#a0a0a0"></div>
<svg style="left:4px;top:132px" width="9" height="9" viewBox="0 0 9 9" shape-rendering="crispEdges"><rect x="0.5" y="0.5" width="8" height="8" fill="#fff" stroke="#909090"/><path d="M2 4.5 H7 M4.5 2 V7" stroke="#000" stroke-width="1"/></svg>
<svg style="left:20px;top:130px" width="16" height="14" viewBox="0 0 16 14"><path d="M0.7 3.7 L3.7 0.7 H15.3 V10.3 L12.3 13.3 H0.7 Z" fill="#ffef30" stroke="#000" stroke-width="1.3"/><path d="M0.7 3.7 H12.3 V13.3 M12.3 3.7 L15.3 0.7" fill="none" stroke="#000" stroke-width="1"/><path d="M3.5 6.5 L5.5 4.8 H10.8 V9 L8.8 10.8 H3.5 Z" fill="#3c80e0" stroke="#102868" stroke-width="1"/><path d="M3.5 6.5 H8.8 V10.8 M8.8 6.5 L10.8 4.8" stroke="#102868" stroke-width=".8" fill="none"/></svg>
<div class="tt" style="left:39.6px;top:128.0px;letter-spacing:0.23px">Nut außen</div>
<div class="a" style="left:9px;top:152px;width:12px;height:1px;background:#a0a0a0"></div>
<svg style="left:4px;top:148px" width="9" height="9" viewBox="0 0 9 9" shape-rendering="crispEdges"><rect x="0.5" y="0.5" width="8" height="8" fill="#fff" stroke="#909090"/><path d="M2 4.5 H7 M4.5 2 V7" stroke="#000" stroke-width="1"/></svg>
<svg style="left:20.5px;top:145px" width="15" height="15" viewBox="0 0 15 15"><path d="M3 3 H12 M3 12 H12 M3 3 V12 M12 3 V12" stroke="#333" stroke-width=".9" stroke-dasharray="1 1.3"/><circle cx="3" cy="2.6" r="2.1" fill="#ffef40" stroke="#2a44a0" stroke-width="1.1"/><circle cx="12" cy="2.6" r="2.1" fill="#b0ccf4" stroke="#2a44a0" stroke-width="1.1"/><circle cx="3" cy="12" r="2.1" fill="#b0ccf4" stroke="#2a44a0" stroke-width="1.1"/><circle cx="12" cy="12" r="2.1" fill="#b0ccf4" stroke="#2a44a0" stroke-width="1.1"/></svg>
<div class="tt" style="left:39.6px;top:144.0px;letter-spacing:0.06px">Nuten außen links oben</div>
<div class="a" style="left:9px;top:168px;width:12px;height:1px;background:#a0a0a0"></div>
<svg style="left:4px;top:164px" width="9" height="9" viewBox="0 0 9 9" shape-rendering="crispEdges"><rect x="0.5" y="0.5" width="8" height="8" fill="#fff" stroke="#909090"/><path d="M2 4.5 H7 M4.5 2 V7" stroke="#000" stroke-width="1"/></svg>
<svg style="left:20.5px;top:161px" width="15" height="15" viewBox="0 0 15 15"><path d="M3 3 H12 M3 12 H12 M3 3 V12 M12 3 V12" stroke="#333" stroke-width=".9" stroke-dasharray="1 1.3"/><circle cx="3" cy="2.6" r="2.1" fill="#ffef40" stroke="#2a44a0" stroke-width="1.1"/><circle cx="12" cy="2.6" r="2.1" fill="#b0ccf4" stroke="#2a44a0" stroke-width="1.1"/><circle cx="3" cy="12" r="2.1" fill="#b0ccf4" stroke="#2a44a0" stroke-width="1.1"/><circle cx="12" cy="12" r="2.1" fill="#b0ccf4" stroke="#2a44a0" stroke-width="1.1"/></svg>
<div class="tt" style="left:39.6px;top:160.0px;letter-spacing:0px">Nuten außen alle</div>
<div class="a" style="left:9px;top:184px;width:12px;height:1px;background:#a0a0a0"></div>
<svg style="left:4px;top:180px" width="9" height="9" viewBox="0 0 9 9" shape-rendering="crispEdges"><rect x="0.5" y="0.5" width="8" height="8" fill="#fff" stroke="#909090"/><path d="M2 4.5 H7 M4.5 2 V7" stroke="#000" stroke-width="1"/></svg>
<svg style="left:20px;top:178px" width="16" height="14" viewBox="0 0 16 14"><path d="M0.7 3.7 L3.7 0.7 H15.3 V10.3 L12.3 13.3 H0.7 Z" fill="#ffef30" stroke="#000" stroke-width="1.3"/><path d="M0.7 3.7 H12.3 V13.3 M12.3 3.7 L15.3 0.7" fill="none" stroke="#000" stroke-width="1"/><path d="M3.5 6.5 L5.5 4.8 H10.8 V9 L8.8 10.8 H3.5 Z" fill="#3c80e0" stroke="#102868" stroke-width="1"/><path d="M3.5 6.5 H8.8 V10.8 M8.8 6.5 L10.8 4.8" stroke="#102868" stroke-width=".8" fill="none"/></svg>
<div class="tt" style="left:39.6px;top:176.0px;letter-spacing:0px">Umspülung innen</div>
<div class="a" style="left:9px;top:200px;width:12px;height:1px;background:#a0a0a0"></div>
<svg style="left:4px;top:196px" width="9" height="9" viewBox="0 0 9 9" shape-rendering="crispEdges"><rect x="0.5" y="0.5" width="8" height="8" fill="#fff" stroke="#909090"/><path d="M2 4.5 H7 M4.5 2 V7" stroke="#000" stroke-width="1"/></svg>
<svg style="left:20.5px;top:193px" width="15" height="15" viewBox="0 0 15 15"><path d="M3 3 H12 M3 12 H12 M3 3 V12 M12 3 V12" stroke="#333" stroke-width=".9" stroke-dasharray="1 1.3"/><circle cx="3" cy="2.6" r="2.1" fill="#ffef40" stroke="#2a44a0" stroke-width="1.1"/><circle cx="12" cy="2.6" r="2.1" fill="#b0ccf4" stroke="#2a44a0" stroke-width="1.1"/><circle cx="3" cy="12" r="2.1" fill="#b0ccf4" stroke="#2a44a0" stroke-width="1.1"/><circle cx="12" cy="12" r="2.1" fill="#b0ccf4" stroke="#2a44a0" stroke-width="1.1"/></svg>
<div class="tt" style="left:39.6px;top:192.0px;letter-spacing:0.23px">Rechteckige Anordnung6</div>
<div class="a" style="left:9px;top:216px;width:12px;height:1px;background:#a0a0a0"></div>
<svg style="left:19.8px;top:209px" width="15" height="15" viewBox="0 0 15 15"><circle cx="7.5" cy="7.5" r="7" fill="#e02818"/><circle cx="6.5" cy="5.5" r="4" fill="#f05848" opacity=".6"/><path d="M4.5 4.5 L10.5 10.5 M10.5 4.5 L4.5 10.5" stroke="#fff" stroke-width="2"/></svg>
<div class="tt" style="left:39.6px;top:208.0px;letter-spacing:0.19px">Bauteilende</div>
</div>
<div class="a dith" style="left:4px;top:700px;width:199px;height:16px"></div>
<div class="btn" style="left:4px;top:700px;width:16px;height:16px"></div><svg style="left:9px;top:704px" width="4" height="7" viewBox="0 0 4 7"><path d="M4 0 V7 L0 3.5 Z" fill="#000"/></svg>
<div class="btn" style="left:187px;top:700px;width:16px;height:16px"></div><svg style="left:194px;top:704px" width="4" height="7" viewBox="0 0 4 7"><path d="M0 0 V7 L4 3.5 Z" fill="#000"/></svg>
<div class="btn" style="left:20px;top:700px;width:143px;height:16px"></div>
<div class="a" style="left:0;top:720px;width:1024px;height:1px;background:#fff"></div>
<div class="t" style="left:2px;top:726.1px;">Bereit</div>
<div class="a" style="left:1022px;top:68px;width:2px;height:653px;background:#fff"></div>
<div class="a" style="left:0;top:721px;width:1024px;height:1px;background:#ebe9e4"></div>
<div class="a" style="left:0;top:741px;width:1024px;height:1px;background:#f4f3f0"></div>
</body></html>
